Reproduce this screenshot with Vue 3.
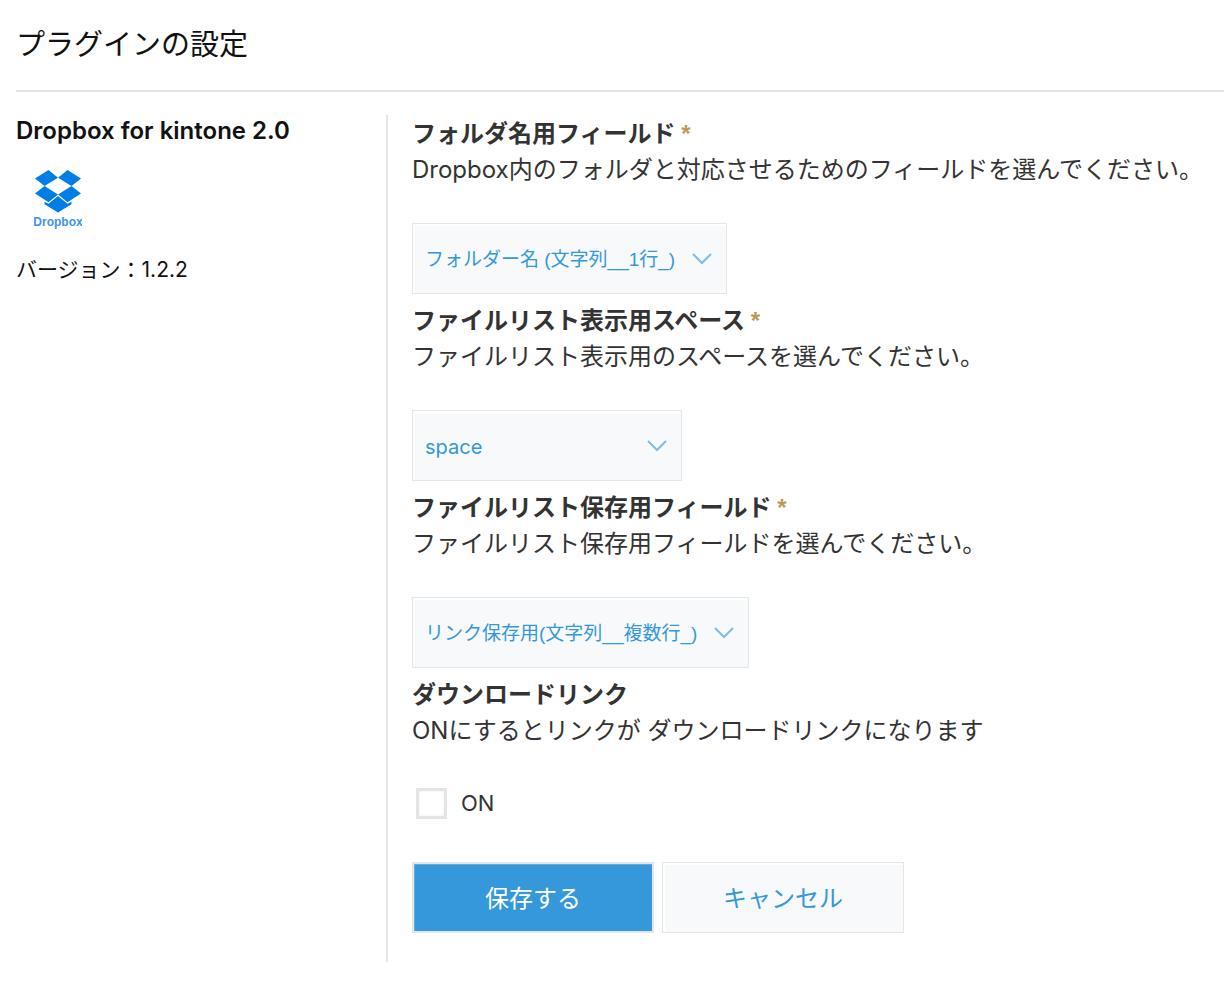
<script setup>
import { ref } from 'vue'

const fields = ref([
  {
    id: 'folder-field',
    label: 'フォルダ名用フィールド',
    description: 'Dropbox内のフォルダと対応させるためのフィールドを選んでください。',
    value: 'フォルダー名 (文字列__1行_)'
  },
  {
    id: 'list-space',
    label: 'ファイルリスト表示用スペース',
    description: 'ファイルリスト表示用のスペースを選んでください。',
    value: 'space',
    latin: true
  },
  {
    id: 'list-field',
    label: 'ファイルリスト保存用フィールド',
    description: 'ファイルリスト保存用フィールドを選んでください。',
    value: 'リンク保存用(文字列__複数行_)'
  }
])
const downloadLink = ref(false)
</script>

<template>
  <div class="page">
    <header class="page-header">
      <h1>プラグインの設定</h1>
    </header>
    <div class="columns">
      <aside class="plugin">
        <h2>Dropbox for kintone 2.0</h2>
        <svg class="logo" viewBox="0 0 48 62" role="img" aria-label="Dropbox">
          <g fill="#007ee5">
            <path d="M14.500 1 24 8.700 10.500 17 1 9.500Z" />
            <path d="M33.500 1 47 9.500 37.500 17 24 8.700Z" />
            <path d="M10.500 17 24 25.400 14.500 33.200 1 24.600Z" />
            <path d="M37.500 17 47 24.600 33.500 33.200 24 25.400Z" />
            <path d="M24 27 33.600 34.700 37.500 32.800V35.300L24 43.400 10.500 35.300V32.800L14.500 34.700Z" />
          </g>
          <text x="24" y="57" text-anchor="middle">Dropbox</text>
        </svg>
        <p>バージョン：1.2.2</p>
      </aside>
      <form class="settings" @submit.prevent>
        <div v-for="field in fields" :key="field.id" class="field">
          <label class="field-label" :for="field.id">{{ field.label }} <span class="required">*</span></label>
          <p class="description">{{ field.description }}</p>
          <div class="select-box">
            <select :id="field.id" v-model="field.value" :class="{ latin: field.latin }">
              <option :value="field.value">{{ field.value }}</option>
            </select>
            <svg class="chevron" viewBox="0 0 20 12" aria-hidden="true">
              <path d="M1 1 10 10 19 1" fill="none" stroke="#7dbcea" stroke-width="2" />
            </svg>
          </div>
        </div>
        <fieldset class="field">
          <legend class="field-label">ダウンロードリンク</legend>
          <p class="description">ONにするとリンクが ダウンロードリンクになります</p>
          <label class="check">
            <input v-model="downloadLink" type="checkbox" />
            <span>ON</span>
          </label>
        </fieldset>
        <div class="actions">
          <button class="primary" type="submit">保存する</button>
          <button type="button">キャンセル</button>
        </div>
      </form>
    </div>
  </div>
</template>

<style>
body {
  margin: 0;
  background: #fff;
}
</style>

<style scoped>
.page {
  padding-left: 16px;
  font-family: Inter, "Noto Sans CJK JP", sans-serif;
  color: #333;
}
h1, h2, p, fieldset, legend {
  margin: 0;
  padding: 0;
  border: 0;
}
.page-header {
  padding: 25px 0;
  border-bottom: 2px solid #e3e3e3;
  color: #111;
}
h1 {
  font-size: 29px;
  line-height: 40px;
  font-weight: 400;
}
.columns {
  display: flex;
  padding-top: 23px;
}
.plugin {
  flex: 0 0 370px;
  color: #111;
}
h2 {
  font-size: 24px;
  line-height: 32px;
  font-weight: 600;
}
.logo {
  display: block;
  width: 48px;
  height: 62px;
  margin: 22px 0 23px 18px;
}
.logo text {
  font: bold 12px "Liberation Sans", sans-serif;
  fill: #3d94ec;
}
.plugin p {
  font-size: 21px;
  line-height: 32px;
}
.settings {
  flex: 1;
  min-width: 0;
  padding: 1px 0 29px 24px;
  border-left: 2px solid #e3e7e8;
}
.field {
  margin-bottom: 9px;
}
.field-label {
  display: block;
  font-size: 24px;
  line-height: 36px;
  font-weight: 700;
}
.required {
  color: #c09853;
  font: bold 24px/20px "Liberation Sans", sans-serif;
}
.description {
  font-size: 24px;
  line-height: 36px;
}
.select-box {
  position: relative;
  width: fit-content;
  margin-top: 35px;
}
select {
  display: block;
  appearance: none;
  min-width: 270px;
  height: 71px;
  padding: 2px 50px 0 12px;
  border: 1px solid #e3e7e8;
  border-radius: 0;
  background: #f7f9fa;
  box-shadow: inset 2px 2px 0 #fff;
  color: #3498db;
  font: 19px/28px "Liberation Sans", "Noto Sans CJK JP", sans-serif;
}
select.latin {
  font: 20px/28px Inter, sans-serif;
}
.chevron {
  position: absolute;
  top: 30px;
  right: 15px;
  width: 20px;
  height: 12px;
  pointer-events: none;
}
.check {
  display: flex;
  align-items: center;
  gap: 14px;
  width: fit-content;
  margin: 38px 0 0 4px;
  font-size: 22px;
  line-height: 32px;
}
.check input {
  appearance: none;
  width: 31px;
  height: 31px;
  margin: 0;
  border: 3px solid #e3e5e5;
  background: #fff;
  box-shadow: inset 0 0 3px #eee;
}
.check input:checked {
  background: #3498db;
}
.actions {
  display: flex;
  gap: 8px;
  margin-top: 43px;
}
button {
  width: 242px;
  height: 71px;
  padding: 2px 0 0;
  border: 1px solid #e3e7e8;
  background: #f7f9fa;
  box-shadow: inset 2px 2px 0 #fff;
  color: #3498db;
  font: 24px/36px Inter, "Noto Sans CJK JP", sans-serif;
}
.primary {
  border-width: 2px;
  background: #3498db;
  box-shadow: inset 1px 1px 0 #5dade2;
  color: #fff;
}
</style>
